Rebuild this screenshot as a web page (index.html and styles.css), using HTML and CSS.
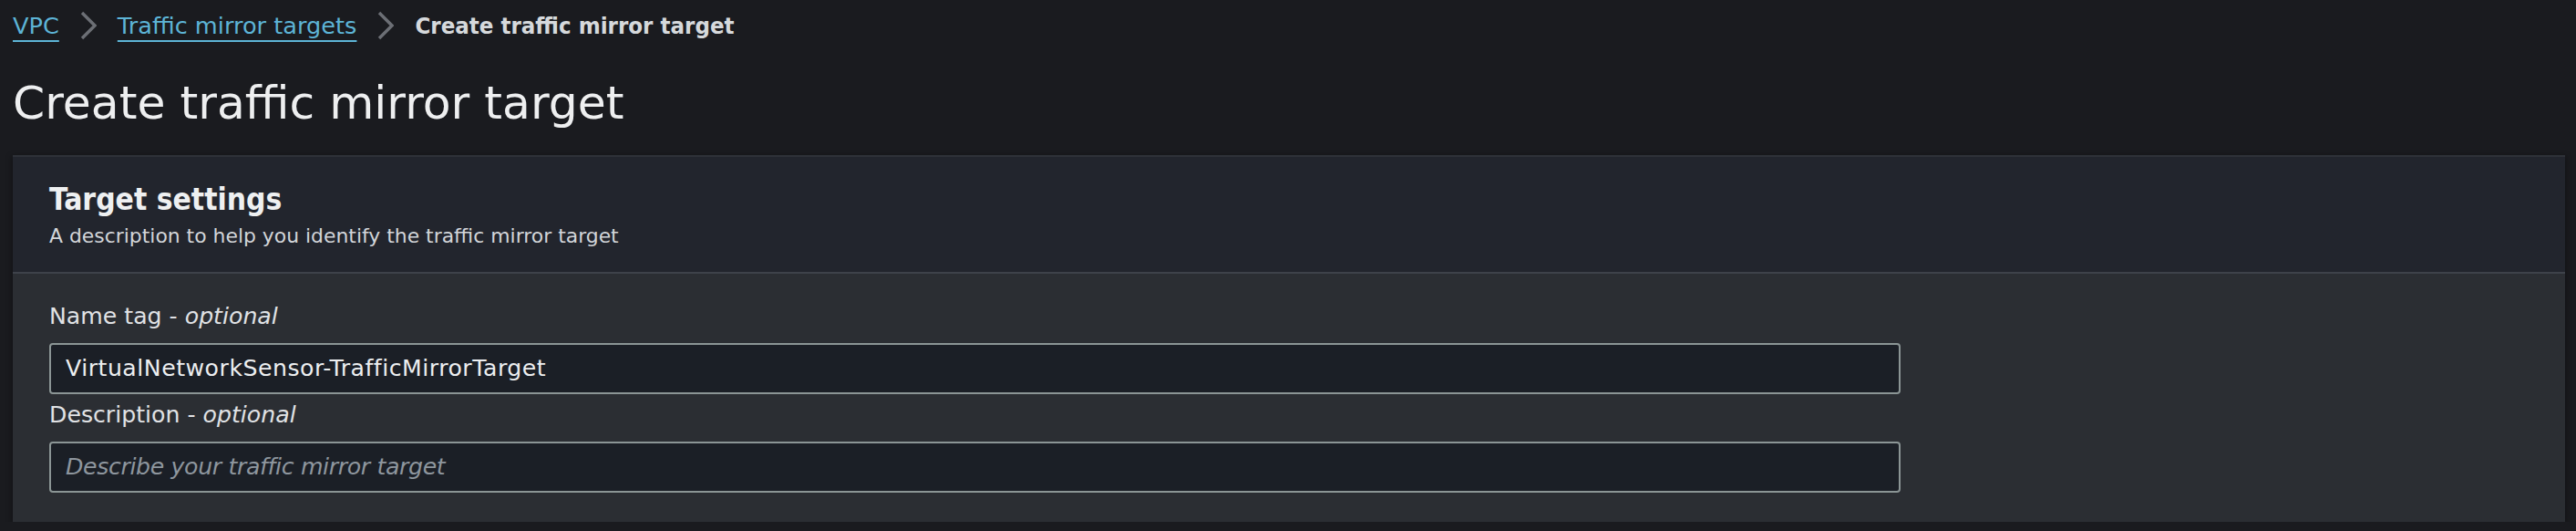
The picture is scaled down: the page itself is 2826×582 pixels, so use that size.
FILE: index.html
```html
<!DOCTYPE html>
<html lang="en">
<head>
<meta charset="utf-8">
<title>Create traffic mirror target</title>
<link rel="stylesheet" href="styles.css">
</head>
<body>
<div class="page">
  <nav class="breadcrumbs">
    <a class="crumb-link" href="#">VPC</a>
    <svg class="chev" viewBox="0 0 18 32" width="18" height="32" aria-hidden="true"><path d="M2 2 L16 16 L2 30" fill="none" stroke="currentColor" stroke-width="3.4" stroke-linejoin="miter"/></svg>
    <a class="crumb-link" href="#">Traffic mirror targets</a>
    <svg class="chev" viewBox="0 0 18 32" width="18" height="32" aria-hidden="true"><path d="M2 2 L16 16 L2 30" fill="none" stroke="currentColor" stroke-width="3.4" stroke-linejoin="miter"/></svg>
    <span class="crumb-current">Create traffic mirror target</span>
  </nav>
  <h1 class="page-title">Create traffic mirror target</h1>
  <section class="card">
    <header class="card-header">
      <h2 class="card-title">Target settings</h2>
      <p class="card-desc">A description to help you identify the traffic mirror target</p>
    </header>
    <div class="card-body">
      <label class="field-label" for="nametag">Name tag - <i>optional</i></label>
      <input class="field-input" id="nametag" type="text" value="VirtualNetworkSensor-TrafficMirrorTarget">
      <label class="field-label" for="desc">Description - <i>optional</i></label>
      <input class="field-input" id="desc" type="text" placeholder="Describe your traffic mirror target">
    </div>
  </section>
</div>
</body>
</html>
```

FILE: styles.css
```css
html, body {
  margin: 0;
  padding: 0;
  background: #1a1b1f;
}
body {
  font-family: "DejaVu Sans", sans-serif;
  color: #e6e8ea;
}
.page {
  padding: 10px 12px 0 14px;
}
.breadcrumbs {
  display: flex;
  align-items: center;
  gap: 23px;
  height: 36px;
  font-size: 25.6px;
  line-height: 36px;
}
.crumb-link {
  color: #5db4d6;
  text-decoration: underline;
  text-decoration-thickness: 2px;
  text-underline-offset: 7px;
}
.chev {
  color: #6c6f75;
  display: block;
}
.crumb-current {
  font-family: "DejaVu Sans Condensed", "DejaVu Sans", sans-serif;
  font-stretch: condensed;
  font-weight: bold;
  color: #d6d9dc;
}
.page-title {
  margin: 35px 0 0 0;
  font-size: 50.4px;
  line-height: 64px;
  font-weight: normal;
  color: #eeeff0;
}
.card {
  margin-top: 25px;
  background: #2b2e33;
  border-top: 2px solid #2e3138;
  box-shadow: 0 2px 6px 1px rgba(0, 0, 0, 0.35);
}
.card-header {
  background: #22252d;
  padding: 27px 40px 24px 40px;
  border-bottom: 2px solid #3e424a;
}
.card-title {
  margin: 0;
  font-family: "DejaVu Sans Condensed", "DejaVu Sans", sans-serif;
  font-stretch: condensed;
  font-weight: bold;
  font-size: 33.3px;
  line-height: 40px;
  color: #eef0f1;
}
.card-desc {
  margin: 6px 0 0 0;
  font-size: 21.9px;
  line-height: 28.8px;
  color: #d2d5d9;
}
.card-body {
  display: flex;
  flex-direction: column;
  align-items: flex-start;
  padding: 29px 40px 32px 40px;
}
.field-label {
  font-size: 25.2px;
  line-height: 36px;
  color: #e0e2e5;
}
.field-label i {
  font-style: italic;
}
.field-input {
  box-sizing: border-box;
  width: 2031px;
  height: 56px;
  margin: 11px 0 5px 0;
  padding: 0 16px;
  background: #1b1f26;
  border: 2px solid #8b9595;
  border-radius: 4px;
  font-family: "DejaVu Sans", sans-serif;
  font-size: 25.2px;
  letter-spacing: 0.5px;
  color: #eceef0;
  outline: none;
}
.field-input:last-child {
  margin-bottom: 0;
}
.field-input::placeholder {
  color: #8e969e;
  font-style: italic;
  letter-spacing: -0.35px;
}
```
